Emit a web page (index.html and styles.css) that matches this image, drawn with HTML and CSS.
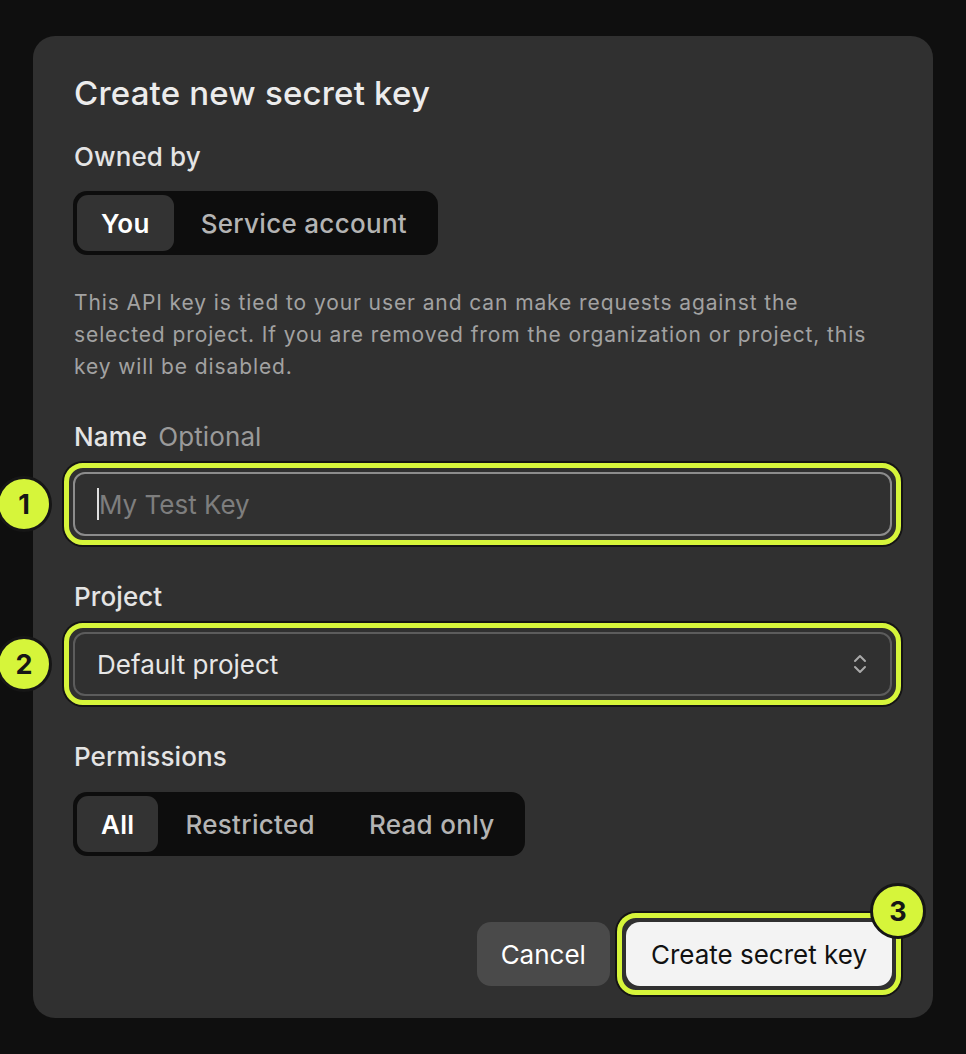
FILE: index.html
```html
<!DOCTYPE html>
<html lang="en">
<head>
    <meta charset="UTF-8">
    <meta name="viewport" content="width=device-width, initial-scale=1.0">
    <title>Create new secret key</title>
    <link rel="stylesheet" href="styles.css">
</head>
<body>

    <div class="modal">
        <h1>Create new secret key</h1>

        <div class="label owned">Owned by</div>
        <div class="segmented">
            <span class="seg active">You</span>
            <span class="seg">Service account</span>
        </div>

        <p class="desc">This API key is tied to your user and can make requests against the<br>selected project. If you are removed from the organization or project, this<br>key will be disabled.</p>

        <div class="field">
            <div class="label">Name <span class="optional">Optional</span></div>
            <div class="highlight">
                <span class="badge badge-left">1</span>
                <div class="input focused">
                    <span class="caret"></span>
                    <span class="placeholder">My Test Key</span>
                </div>
            </div>
        </div>

        <div class="field">
            <div class="label">Project</div>
            <div class="highlight">
                <span class="badge badge-left">2</span>
                <div class="input select">
                    <span class="value">Default project</span>
                    <svg class="chevrons" width="16" height="24" viewBox="0 0 16 24" fill="none" stroke="#a9a9a9" stroke-width="2" stroke-linecap="round" stroke-linejoin="round">
                        <path d="M3 9 L8 4 L13 9"/>
                        <path d="M3 15 L8 20 L13 15"/>
                    </svg>
                </div>
            </div>
        </div>

        <div class="field">
            <div class="label">Permissions</div>
            <div class="segmented">
                <span class="seg active">All</span>
                <span class="seg">Restricted</span>
                <span class="seg">Read only</span>
            </div>
        </div>

        <div class="actions">
            <button class="btn cancel">Cancel</button>
            <div class="highlight">
                <span class="badge badge-corner">3</span>
                <button class="btn primary">Create secret key</button>
            </div>
        </div>
    </div>

</body>
</html>
```

FILE: styles.css
```css
body {
    margin: 0;
    padding: 36px 33px;
    background-color: #0f0f0f;
    font-family: Inter, "Noto Sans", "Liberation Sans", sans-serif;
    color: #ececec;
}
.modal {
    width: 900px;
    box-sizing: border-box;
    background-color: #303030;
    border-radius: 22px;
    padding: 39px 41px 32px 40px;
}
h1 {
    margin: 0 0 0 1px;
    font-size: 33px;
    line-height: 36px;
    font-weight: 500;
    color: #ececec;
    letter-spacing: 0.2px;
}
.label {
    font-size: 26px;
    line-height: 28px;
    font-weight: 500;
    color: #e4e4e4;
    margin: 0 0 21px 1px;
    letter-spacing: 0.1px;
}
.label.owned {
    margin-top: 32px;
    margin-bottom: 20px;
}
.optional {
    font-weight: 400;
    color: #9a9a9a;
    margin-left: 4px;
}
.segmented {
    display: inline-flex;
    align-items: center;
    background-color: #0d0d0d;
    border-radius: 14px;
    padding: 4px;
    height: 64px;
    box-sizing: border-box;
}
.seg {
    display: flex;
    align-items: center;
    height: 56px;
    padding: 0 27px;
    border-radius: 11px;
    font-size: 26px;
    font-weight: 500;
    color: #b4b4b4;
    letter-spacing: 0.3px;
}
.seg.active {
    background-color: #333333;
    color: #ffffff;
    font-weight: 600;
    padding: 0 24px;
}
.desc {
    margin: 32px 0 40px 1px;
    font-size: 21px;
    line-height: 32px;
    color: #a2a2a2;
    letter-spacing: 0.9px;
    white-space: nowrap;
}
.field {
    margin-bottom: 47px;
}
.field:last-of-type {
    margin-bottom: 0;
}

/* tutorial highlight ring, drawn outside the control */
.highlight {
    position: relative;
    border: 5px solid #d6f53a;
    border-radius: 19px;
    padding: 4px;
    margin: -9px;
    box-shadow: 0 0 0 2px #141414;
}
.badge {
    position: absolute;
    width: 56px;
    height: 56px;
    box-sizing: border-box;
    border-radius: 50%;
    border: 3px solid #161616;
    background-color: #d6f53a;
    color: #161616;
    font-size: 27px;
    font-weight: 700;
    display: flex;
    align-items: center;
    justify-content: center;
}
.badge-left {
    left: -73px;
    top: 50%;
    transform: translateY(-50%);
}
.badge-corner {
    right: -30px;
    top: -35px;
}

.input {
    display: flex;
    align-items: center;
    height: 64px;
    box-sizing: border-box;
    border: 2px solid #5c5c5c;
    border-radius: 12px;
    padding: 0 22px;
    font-size: 26px;
}
.input.focused {
    border-color: #8c8c8c;
}
.caret {
    width: 2px;
    height: 32px;
    background-color: #e0e0e0;
}
.placeholder {
    color: #7e7e7e;
}
.select {
    justify-content: space-between;
}
.select .value {
    color: #e6e6e6;
}

.actions {
    display: flex;
    justify-content: flex-end;
    align-items: center;
    gap: 16px;
    margin-top: 66px;
}
.btn {
    font-family: inherit;
    font-size: 26px;
    height: 64px;
    border: none;
    border-radius: 14px;
    padding: 0 24px;
    cursor: pointer;
}
.cancel {
    background-color: #4a4a4a;
    color: #ffffff;
}
.primary {
    display: block;
    background-color: #f3f3f3;
    color: #111111;
    padding: 0 25px;
}
```
